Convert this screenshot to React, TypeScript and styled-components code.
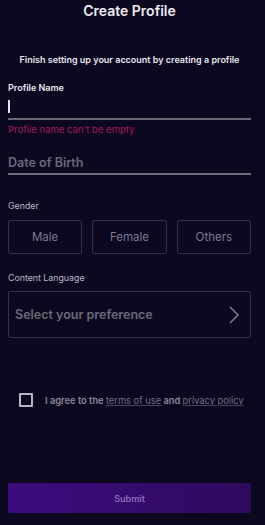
import React from 'react';
import styled, { createGlobalStyle } from 'styled-components';

const GlobalStyle = createGlobalStyle`
    body {
        margin: 0;
        background: #0c0820;
        font-family: Inter, "Noto Sans", sans-serif;
    }
`;

const Page = styled.main`
    display: flex;
    flex-direction: column;
    width: 265px;
    height: 525px;
    padding: 0 14px 0 8px;
    box-sizing: border-box;
    background: #0c0820;
    color: #e6e4ec;
`;

const Title = styled.h1`
    margin: 2px 0 0;
    font-size: 14px;
    line-height: 18px;
    font-weight: 600;
    text-align: center;
    color: #ecebf0;
`;

const Subtitle = styled.p`
    margin: 34px 0 0;
    font-size: 9px;
    line-height: 12px;
    font-weight: 600;
    text-align: center;
    color: #e8e6ee;
`;

const FieldLabel = styled.label<{ $strong?: boolean; $top: number }>`
    display: block;
    margin-top: ${p => p.$top}px;
    font-size: ${p => (p.$strong ? 9 : 8.8)}px;
    line-height: 12px;
    font-weight: ${p => (p.$strong ? 600 : 400)};
    color: ${p => (p.$strong ? '#e8e6ee' : '#b9b6c4')};
`;

const UnderlineField = styled.div<{ $top?: number; $height: number }>`
    display: flex;
    align-items: center;
    height: ${p => p.$height}px;
    margin-top: ${p => p.$top ?? 0}px;
    border-bottom: 2px solid #6c6878;
    font-size: 12.5px;
    font-weight: 600;
    color: #6c6878;
`;

const Cursor = styled.span`
    width: 1.5px;
    height: 13px;
    background: #e8e6ee;
`;

const ErrorText = styled.p`
    margin: 4px 0 0;
    font-size: 9.5px;
    line-height: 12px;
    color: #a31a55;
`;

const OptionRow = styled.div`
    display: grid;
    grid-template-columns: repeat(3, 1fr);
    gap: 10px;
    margin-top: 8px;
`;

const OptionButton = styled.button`
    height: 34px;
    background: transparent;
    border: 1px solid #34304a;
    border-radius: 2px;
    font-family: inherit;
    font-size: 11.5px;
    color: #7c7890;
`;

const SelectBox = styled.button`
    display: flex;
    align-items: center;
    justify-content: space-between;
    height: 47px;
    margin-top: 7px;
    padding: 0 10px 0 6px;
    background: transparent;
    border: 1px solid #34304a;
    border-radius: 2px;
    font-family: inherit;
    font-size: 12.5px;
    font-weight: 600;
    color: #6c6878;
`;

const AgreeRow = styled.div`
    display: flex;
    align-items: center;
    gap: 12px;
    margin-top: 55px;
    padding-left: 11px;
    font-size: 9.3px;
    font-weight: 600;
    color: #8a8698;
`;

const Checkbox = styled.span`
    flex: none;
    width: 10px;
    height: 10px;
    border: 2px solid #b9b6c4;
    border-radius: 1px;
`;

const TermsLink = styled.a`
    font-weight: 400;
    color: #716d84;
    text-decoration: underline;
    text-decoration-color: #4a4660;
`;

const SubmitButton = styled.button`
    height: 30px;
    margin-top: auto;
    margin-bottom: 12px;
    background: linear-gradient(90deg, #3c0c7e, #2e0a5e);
    border: none;
    border-radius: 2px;
    font-family: inherit;
    font-size: 9px;
    font-weight: 600;
    color: #8c6cb8;
`;

const Chevron = () => (
    <svg width="12" height="20" viewBox="0 0 12 20" fill="none">
        <path d="M2 2 L10 10 L2 18" stroke="#7c7890" strokeWidth="1.6" />
    </svg>
);

const App: React.FC = () => {
    return <>
        <GlobalStyle />
        <Page>
            <Title>Create Profile</Title>
            <Subtitle>Finish setting up your account by creating a profile</Subtitle>

            <FieldLabel $strong $top={16}>Profile Name</FieldLabel>
            <UnderlineField $height={24}><Cursor /></UnderlineField>
            <ErrorText>Profile name can't be empty</ErrorText>

            <UnderlineField $top={15} $height={22}>Date of Birth</UnderlineField>

            <FieldLabel $top={25}>Gender</FieldLabel>
            <OptionRow>
                <OptionButton>Male</OptionButton>
                <OptionButton>Female</OptionButton>
                <OptionButton>Others</OptionButton>
            </OptionRow>

            <FieldLabel $top={18}>Content Language</FieldLabel>
            <SelectBox>
                Select your preference
                <Chevron />
            </SelectBox>

            <AgreeRow>
                <Checkbox />
                <span>
                    I agree to the <TermsLink>terms of use</TermsLink> and <TermsLink>privacy policy</TermsLink>
                </span>
            </AgreeRow>

            <SubmitButton>Submit</SubmitButton>
        </Page>
    </>;
};

export default App;
